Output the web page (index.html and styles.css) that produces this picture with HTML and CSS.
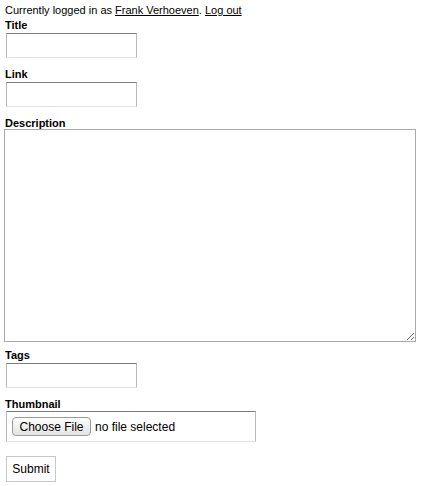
FILE: index.html
```html
<!DOCTYPE html>
<html>
<head>
<meta charset="utf-8">
<link rel="stylesheet" href="styles.css">
</head>
<body>
<div class="page">
  <div class="status">Currently logged in as <a href="#">Frank Verhoeven</a>. <a href="#">Log out</a></div>
  <form class="form">
    <div class="field">
      <label class="label">Title</label>
      <input class="text" type="text">
    </div>
    <div class="field">
      <label class="label">Link</label>
      <input class="text" type="text">
    </div>
    <div class="field field-area">
      <label class="label">Description</label>
      <textarea class="area"></textarea>
    </div>
    <div class="field">
      <label class="label">Tags</label>
      <input class="text" type="text">
    </div>
    <div class="field">
      <label class="label">Thumbnail</label>
      <div class="file">
        <span class="file-btn">Choose File</span>
        <span class="file-name">no file selected</span>
      </div>
    </div>
    <div class="actions">
      <button class="submit" type="button">Submit</button>
    </div>
  </form>
</div>
</body>
</html>
```
FILE: styles.css
```css
html, body {
  margin: 0;
  padding: 0;
  background: #fff;
}
body {
  font-family: "Liberation Sans", Arial, sans-serif;
  font-size: 11px;
  color: #000;
}
.page {
  padding: 3px 0 0 4px;
}
.status {
  line-height: 14px;
  padding-left: 1px;
}
.status a {
  color: #000;
  text-decoration: underline;
}
.form {
  margin: 0;
}
.field {
  display: flex;
  flex-direction: column;
  align-items: flex-start;
  margin-bottom: 6px;
}
.field-area {
  margin-bottom: 5px;
}
.label {
  display: block;
  font-weight: bold;
  line-height: 11px;
  padding-top: 3px;
  padding-left: 1px;
}
.text {
  box-sizing: border-box;
  width: 131px;
  height: 25px;
  margin: 2px 2px;
  border: 1px solid;
  border-color: #7d7d7d #b9b9b9 #e2e2e2 #b9b9b9;
  background: #fff;
  padding: 2px;
  font: inherit;
}
.area {
  box-sizing: border-box;
  width: 412px;
  height: 213px;
  margin: 0;
  border: 1px solid #a9a9a9;
  background: #fff;
  padding: 2px;
  font: inherit;
}
.file {
  box-sizing: border-box;
  width: 250px;
  height: 31px;
  margin: 1px 2px 2px;
  border: 1px solid;
  border-color: #7d7d7d #b9b9b9 #e2e2e2 #b9b9b9;
  display: flex;
  align-items: center;
  padding-left: 5px;
  gap: 4px;
  font-size: 12px;
}
.file-btn {
  box-sizing: border-box;
  height: 19px;
  width: 79px;
  border: 1px solid #9a9a9a;
  border-radius: 4px;
  background: linear-gradient(#fdfdfd, #e4e4e4);
  display: flex;
  align-items: center;
  justify-content: center;
  font-size: 12px;
  line-height: 1;
}
.file-name {
  font-size: 12px;
}
.actions {
  padding-top: 6px;
}
.submit {
  box-sizing: border-box;
  width: 50px;
  height: 26px;
  margin: 0 2px;
  border: 1px solid #c8c8c8;
  background: #fff;
  padding: 0;
  font-family: inherit;
  font-size: 12px;
  color: #000;
}
```
